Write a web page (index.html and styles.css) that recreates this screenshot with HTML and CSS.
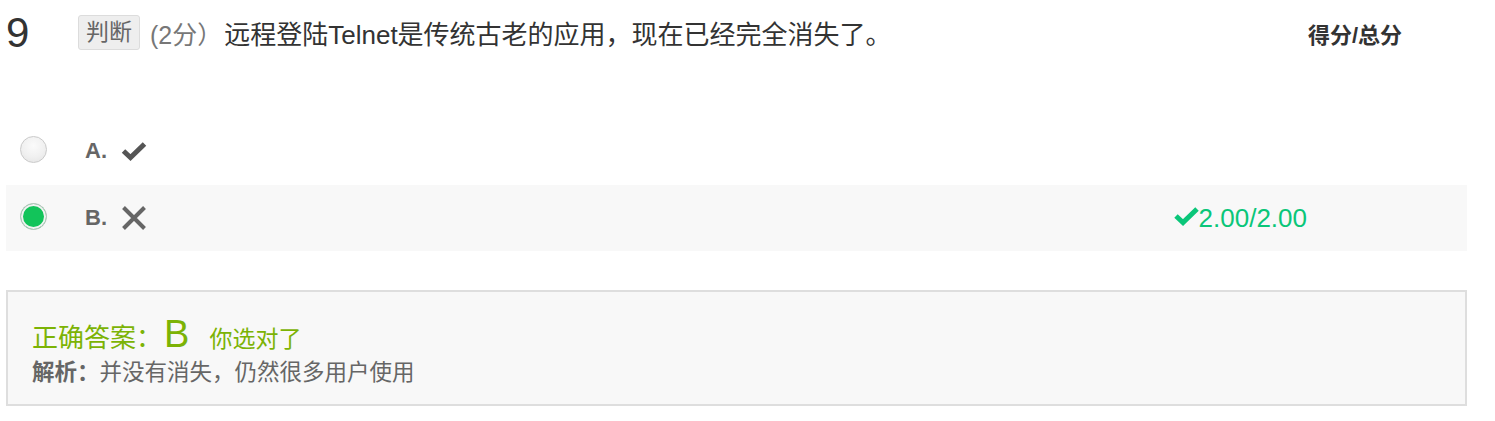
FILE: index.html
```html
<!DOCTYPE html>
<html lang="zh-CN">
<head>
<meta charset="utf-8">
<title>判断题</title>
<link rel="stylesheet" href="styles.css">
</head>
<body>
<div class="page">
  <div class="q-head">
    <div class="q-main">
      <span class="q-num">9</span>
      <span class="q-tag">判断</span>
      <span class="q-score">(2分）</span>
      <span class="q-text">远程登陆Telnet是传统古老的应用，现在已经完全消失了。</span>
    </div>
    <div class="q-total">得分/总分</div>
  </div>

  <div class="options">
    <div class="opt">
      <span class="radio"></span>
      <span class="opt-label">A.</span>
      <svg class="opt-icon" width="26" height="19" viewBox="0 0 26 19"><polyline points="2.5,9 9.5,15.5 23.5,2" fill="none" stroke="#555" stroke-width="5"/></svg>
    </div>
    <div class="opt opt-sel">
      <span class="radio radio-on"></span>
      <span class="opt-label">B.</span>
      <svg class="opt-icon" width="26" height="26" viewBox="0 0 26 26"><path d="M2.5 2.5 L23.5 23.5 M23.5 2.5 L2.5 23.5" fill="none" stroke="#666" stroke-width="4"/></svg>
      <span class="opt-score"><svg class="ok-icon" width="25" height="19" viewBox="0 0 25 19"><polyline points="2,9 9,15.5 23,2" fill="none" stroke="#0ac679" stroke-width="5"/></svg>2.00/2.00</span>
    </div>
  </div>

  <div class="answer">
    <div class="ans-line">
      <span class="ans-label">正确答案：</span>
      <span class="ans-key">B</span>
      <span class="ans-ok">你选对了</span>
    </div>
    <div class="ans-note"><b>解析：</b>并没有消失，仍然很多用户使用</div>
  </div>
</div>
</body>
</html>
```

FILE: styles.css
```css
html, body {
  margin: 0;
  padding: 0;
  background: #fff;
}
body {
  font-family: "Liberation Sans", "Noto Sans CJK SC", sans-serif;
  color: #333;
}
.page {
  margin: 0 28px 0 6px;
}
.q-head {
  display: flex;
  align-items: center;
  height: 35px;
  padding-top: 15px;
}
.q-main {
  flex: 1;
  display: flex;
  align-items: center;
  white-space: nowrap;
}
.q-num {
  width: 72px;
  font-size: 42px;
  line-height: 1;
  color: #333;
}
.q-tag {
  box-sizing: border-box;
  height: 35px;
  padding: 0 7px;
  border: 1px solid #dcdcdc;
  border-radius: 3px;
  background: #eee;
  color: #666;
  font-size: 23px;
  line-height: 33px;
}
.q-score {
  margin-left: 10px;
  color: #777;
  font-size: 25px;
}
.q-text {
  margin-left: 2px;
  font-size: 26px;
  color: #333;
}
.q-total {
  width: 159px;
  font-size: 22px;
  font-weight: bold;
  color: #333;
}
.options {
  margin-top: 68px;
  display: flex;
  flex-direction: column;
  gap: 1px;
}
.opt {
  display: flex;
  align-items: center;
  height: 66px;
  padding-left: 14px;
  padding-right: 160px;
}
.opt-sel {
  background: #f8f8f8;
}
.radio {
  box-sizing: border-box;
  width: 27px;
  height: 27px;
  border-radius: 50%;
  border: 1.5px solid #cacaca;
  background: radial-gradient(circle at 50% 35%, #fbfbfb 0%, #f0f0f0 55%, #e2e2e2 100%);
  margin-top: -4px;
}
.radio-on {
  border: 1.5px solid #c4c4c4;
  background: #12c45a;
  box-shadow: inset 0 0 0 2px #f2f2f2;
}
.opt-label {
  margin-left: 38px;
  font-size: 22px;
  font-weight: bold;
  color: #666;
  width: 36px;
}
.opt-icon {
  display: block;
}
.opt-score {
  margin-left: auto;
  display: flex;
  align-items: center;
  font-size: 26px;
  color: #0ac679;
}
.ok-icon {
  display: block;
  margin-top: -3px;
}
.answer {
  margin-top: 39px;
  border: 2px solid #dedede;
  background: #f8f8f8;
  padding: 22px 24px 16px 24px;
}
.ans-line {
  display: flex;
  align-items: baseline;
  line-height: 40px;
  color: #7cb305;
}
.ans-label {
  font-size: 26px;
}
.ans-key {
  font-size: 38px;
  margin-left: 2px;
}
.ans-ok {
  font-size: 23px;
  margin-left: 20px;
}
.ans-note {
  margin-top: -1px;
  font-size: 22.5px;
  line-height: 30px;
  color: #666;
}
.ans-note b {
  font-weight: bold;
}
```
